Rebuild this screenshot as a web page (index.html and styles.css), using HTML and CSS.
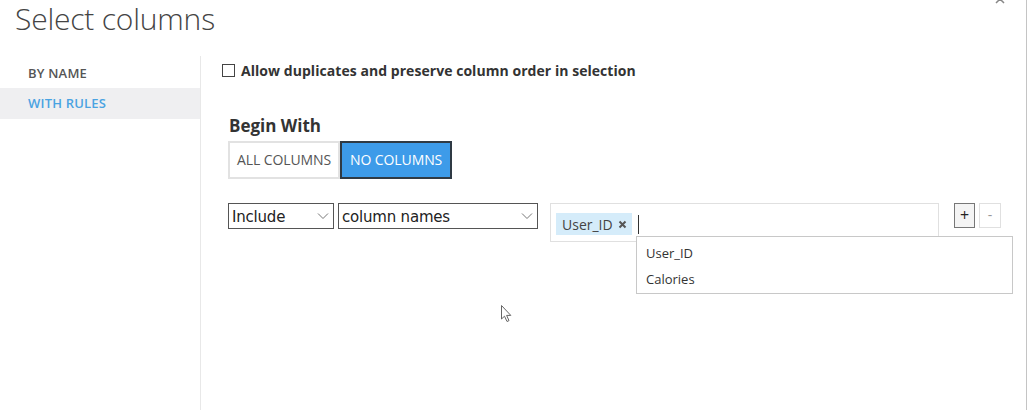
FILE: index.html
```html
<!DOCTYPE html>
<html>
<head>
<meta charset="utf-8">
<link rel="stylesheet" href="styles.css">
</head>
<body>
<div class="dialog">
  <svg class="close" width="12" height="12" viewBox="0 0 12 12"><path d="M2 2 L10 10 M10 2 L2 10" stroke="#888" stroke-width="1.5"/></svg>
  <h1 class="title">Select columns</h1>
  <div class="body">
    <nav class="nav">
      <div class="nav-item">BY NAME</div>
      <div class="nav-item active">WITH RULES</div>
    </nav>
    <main class="content">
      <label class="check-row"><span class="checkbox"></span><span class="check-label">Allow duplicates and preserve column order in selection</span></label>
      <h2 class="section-title">Begin With</h2>
      <div class="toggle">
        <div class="toggle-btn">ALL COLUMNS</div>
        <div class="toggle-btn selected">NO COLUMNS</div>
      </div>
      <div class="rule-row">
        <div class="select sel-include"><span>Include</span><svg class="chev" width="12" height="8" viewBox="0 0 12 8"><path d="M1 1.5 L6 6.5 L11 1.5" fill="none" stroke="#777" stroke-width="1"/></svg></div>
        <div class="select sel-names"><span>column names</span><svg class="chev" width="12" height="8" viewBox="0 0 12 8"><path d="M1 1.5 L6 6.5 L11 1.5" fill="none" stroke="#777" stroke-width="1"/></svg></div>
        <div class="tag-wrap">
          <div class="tag-input">
            <span class="tag">User_ID <svg class="tag-x" width="9" height="9" viewBox="0 0 9 9"><path d="M1.5 1.5 L7.5 7.5 M7.5 1.5 L1.5 7.5" stroke="#555" stroke-width="2"/></svg></span>
            <span class="caret"></span>
          </div>
          <div class="dropdown">
            <div class="dd-item">User_ID</div>
            <div class="dd-item">Calories</div>
          </div>
        </div>
        <div class="btns">
          <div class="sq-btn plus">+</div>
          <div class="sq-btn minus">-</div>
        </div>
      </div>
    </main>
  </div>
  <svg class="pointer" width="14" height="20" viewBox="0 0 14 20"><path d="M1.5 1.5 L1.5 15 L4.5 12.2 L7 17.5 L9 16.6 L6.6 11.4 L10.8 11.4 Z" fill="#fff" stroke="#666" stroke-width="1" stroke-linejoin="round"/></svg>
</div>
</body>
</html>
```
FILE: styles.css
```css
html, body {
  margin: 0;
  padding: 0;
  background: #fff;
}
body {
  font-family: "Open Sans", "Noto Sans", sans-serif;
  color: #333;
  overflow: hidden;
}
.dialog {
  position: relative;
  width: 1026px;
  height: 410px;
  border-right: 1px solid #c4c4c4;
  box-sizing: content-box;
}
.close {
  position: absolute;
  right: 20px;
  top: -7px;
}
.title {
  margin: 0;
  padding: 0 0 0 15px;
  height: 56px;
  font-weight: 300;
  font-size: 30px;
  line-height: 38px;
  color: #444;
  letter-spacing: -0.2px;
}
.body {
  display: flex;
  height: 354px;
}
.nav {
  width: 201px;
  flex: none;
  border-right: 1px solid #e8e8e8;
  padding-top: 2px;
  box-sizing: border-box;
}
.nav-item {
  height: 30px;
  line-height: 30px;
  padding-left: 28px;
  font-size: 13px;
  font-weight: 600;
  color: #555;
  letter-spacing: 0.2px;
}
.nav-item.active {
  height: 31px;
  background: #efeff1;
  color: #4aa3e2;
}
.content {
  flex: 1;
  padding: 6px 0 0 21px;
}
.check-row {
  display: flex;
  align-items: center;
  height: 16px;
}
.checkbox {
  width: 11px;
  height: 11px;
  border: 1px solid #444;
  margin-right: 6px;
  flex: none;
}
.check-label {
  font-size: 14px;
  font-weight: 700;
  color: #333;
  letter-spacing: 0.05px;
}
.section-title {
  margin: 36px 0 0 7px;
  font-size: 17px;
  font-weight: 700;
  line-height: 23px;
  color: #333;
}
.toggle {
  display: flex;
  margin: 4px 0 0 6px;
}
.toggle-btn {
  height: 34px;
  line-height: 34px;
  font-size: 14px;
  color: #555;
  border: 2px solid #e2e2e2;
  padding: 0 7px 0 7px;
  letter-spacing: -0.1px;
}
.toggle-btn.selected {
  background: #3d9be9;
  color: #fff;
  border-color: #2f3a44;
  padding: 0 8px 0 8px;
}
.rule-row {
  display: flex;
  align-items: flex-start;
  margin: 24px 0 0 6px;
}
.select {
  display: flex;
  align-items: center;
  justify-content: space-between;
  border: 1px solid #555;
  box-sizing: border-box;
  height: 26px;
  padding: 2px 4px 0 3px;
  font-family: "DejaVu Sans", Verdana, sans-serif;
  font-size: 15px;
  color: #222;
  letter-spacing: -0.2px;
}
.sel-include {
  width: 106px;
}
.sel-names {
  width: 200px;
  margin-left: 4px;
}
.chev {
  flex: none;
  margin-top: -2px;
}
.tag-wrap {
  position: relative;
  margin-left: 12px;
}
.tag-input {
  display: flex;
  align-items: center;
  width: 389px;
  height: 39px;
  border: 1px solid #e0e0e0;
  box-sizing: border-box;
  padding: 0 0 0 5px;
}
.tag {
  display: inline-flex;
  align-items: center;
  height: 22px;
  margin-top: 3px;
  background: #d5ecfa;
  padding: 0 5px 0 6px;
  font-size: 14px;
  color: #444;
}
.tag-x {
  margin-left: 5px;
}
.caret {
  width: 1px;
  height: 19px;
  background: #333;
  margin: 3px 0 0 6px;
}
.dropdown {
  position: absolute;
  left: 86px;
  top: 33px;
  width: 377px;
  height: 58px;
  border: 1px solid #c8c8c8;
  background: #fff;
  box-sizing: border-box;
  padding-top: 3px;
  z-index: 2;
}
.dd-item {
  height: 26px;
  line-height: 26px;
  padding-left: 9px;
  font-size: 13px;
  color: #333;
}
.btns {
  display: flex;
  margin-left: 15px;
}
.sq-btn {
  width: 21px;
  height: 25px;
  box-sizing: border-box;
  text-align: center;
  line-height: 22px;
  font-size: 14px;
}
.plus {
  border: 1px solid #777;
  background: #f4f4f4;
  color: #222;
  font-size: 16px;
}
.minus {
  margin-left: 4px;
  width: 22px;
  border: 1px solid #e0e0e0;
  color: #999;
}
.pointer {
  position: absolute;
  left: 500px;
  top: 304px;
}
```
